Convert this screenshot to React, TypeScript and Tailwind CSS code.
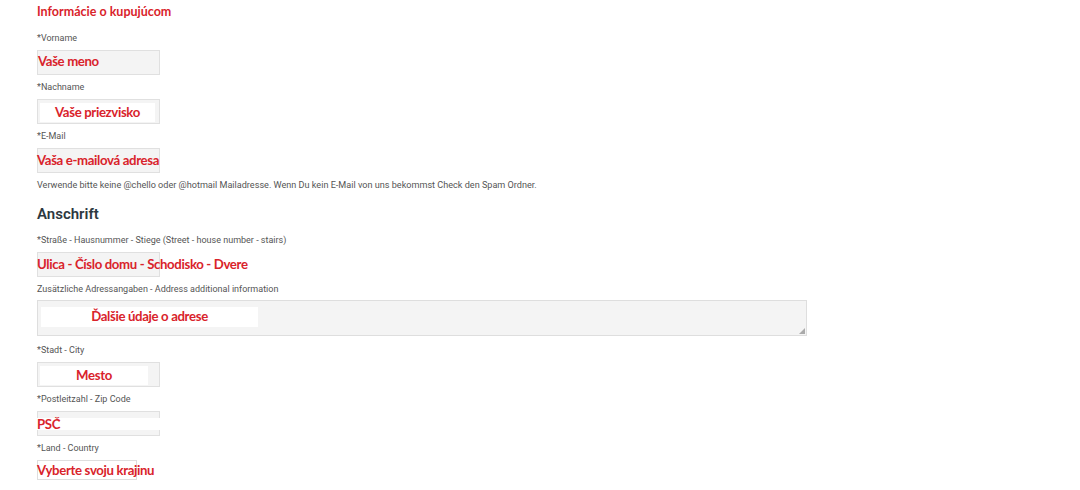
import React from 'react';

const red = 'text-[#d9232b]';
const overlayFont = { fontFamily: 'Lato, "Open Sans", sans-serif' };

interface FieldProps {
  label: string;
  children: React.ReactNode;
}

const Label: React.FC<{ children: React.ReactNode }> = ({ children }) => (
  <div className="h-[14px] text-[9px] leading-[14px] text-[#555]">{children}</div>
);

const Field: React.FC<FieldProps> = ({ label, children }) => (
  <div className="flex flex-col gap-[5px] mb-[5px]">
    <Label>{label}</Label>
    {children}
  </div>
);

// gray input box with a red pasted-on hint over it
const Input: React.FC<{ children?: React.ReactNode }> = ({ children }) => (
  <div className="relative h-[25px] w-[123px] bg-[#f4f4f4] border border-[#e0e0e0]">{children}</div>
);

const Hint: React.FC<{ className?: string; children: React.ReactNode }> = ({ className = '', children }) => (
  <span
    className={`absolute whitespace-nowrap font-bold text-[13.2px] tracking-[-0.35px] leading-[16px] ${red} ${className}`}
    style={overlayFont}
  >
    {children}
  </span>
);

const BoxHint: React.FC<{ className: string; children: React.ReactNode }> = ({ className, children }) => (
  <div className={`absolute bg-white flex items-center justify-center ${className}`}>
    <span className={`font-bold text-[13.2px] tracking-[-0.35px] ${red}`} style={overlayFont}>
      {children}
    </span>
  </div>
);

export default function App() {
  return (
    <div
      className="w-[1080px] h-[490px] overflow-hidden bg-white pl-[37px] pt-[2px]"
      style={{ fontFamily: 'Roboto, "Liberation Sans", sans-serif' }}
    >
      <h2 className={`h-[20px] text-[12.5px] leading-[20px] font-bold ${red} mb-[9px]`} style={overlayFont}>
        Informácie o kupujúcom
      </h2>

      <Field label="*Vorname">
        <Input>
          <Hint className="left-0 top-[2px]">Vaše meno</Hint>
        </Input>
      </Field>

      <Field label="*Nachname">
        <Input>
          <BoxHint className="left-[2px] top-[3px] w-[115px] h-[19px]">Vaše priezvisko</BoxHint>
        </Input>
      </Field>

      <div className="flex flex-col gap-[5px]">
        <Label>*E-Mail</Label>
        <Input>
          <Hint className="-left-[1px] top-[3px]">Vaša e-mailová adresa</Hint>
        </Input>
      </div>
      <p className="mt-[5px] h-[14px] text-[9.1px] leading-[14px] text-[#555]">
        Verwende bitte keine @chello oder @hotmail Mailadresse. Wenn Du kein E-Mail von uns bekommst Check den Spam Ordner.
      </p>

      <h3 className="mt-[11px] mb-[8px] h-[22px] text-[15px] leading-[22px] font-semibold text-[#2d3840]">Anschrift</h3>

      <Field label="*Straße - Hausnummer - Stiege (Street - house number - stairs)">
        <Input>
          <Hint className="-left-[1px] top-[3px]">Ulica - Číslo domu - Schodisko - Dvere</Hint>
        </Input>
      </Field>

      <div className="flex flex-col gap-[5px] mb-[7px]">
        <Label>Zusätzliche Adressangaben - Address additional information</Label>
        <div className="relative -mt-[1px] h-[36px] w-[770px] bg-[#f4f4f4] border border-[#dedede]">
          <BoxHint className="left-[3px] top-[6px] w-[217px] h-[20px]">Ďalšie údaje o adrese</BoxHint>
          <svg className="absolute right-[1px] bottom-[1px]" width="6" height="6" viewBox="0 0 6 6">
            <path d="M6 0 L6 6 L0 6 Z" fill="#aaa" />
          </svg>
        </div>
      </div>

      <Field label="*Stadt - City">
        <Input>
          <BoxHint className="left-[2px] top-[3px] w-[108px] h-[19px]">Mesto</BoxHint>
        </Input>
      </Field>

      <Field label="*Postleitzahl - Zip Code">
        <Input>
          <div className="absolute -left-[1px] top-[6px] w-[123px] h-[12px] bg-white" />
          <Hint className="-left-[1px] top-[4px]">PSČ</Hint>
        </Input>
      </Field>

      <div className="flex flex-col gap-[5px]">
        <Label>*Land - Country</Label>
        <div className="relative h-[20px] w-[100px] border border-[#dedede] bg-white">
          <Hint className="-left-[1px] top-[1px]">Vyberte svoju krajinu</Hint>
        </div>
      </div>
    </div>
  );
}
